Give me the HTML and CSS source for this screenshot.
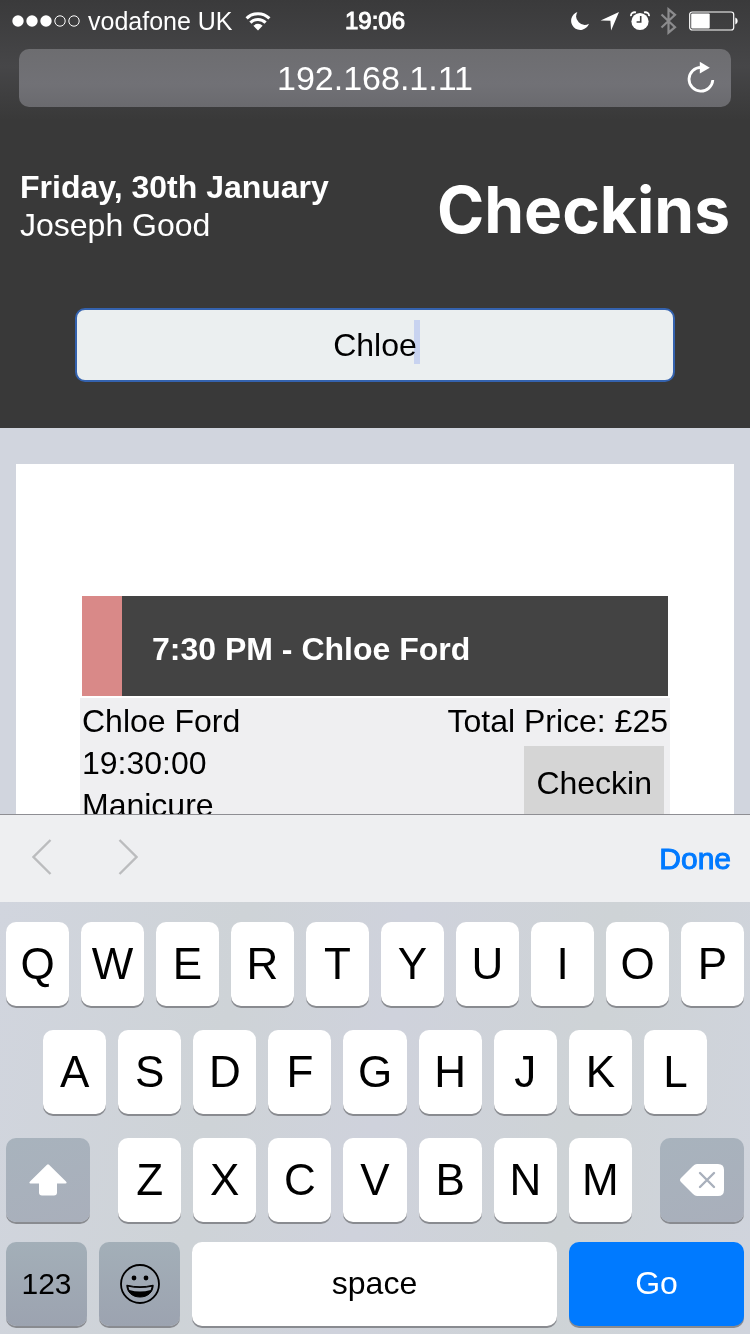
FILE: index.html
```html
<!DOCTYPE html>
<html lang="en">
<head>
<meta charset="utf-8">
<meta name="viewport" content="width=device-width, initial-scale=1">
<title>Checkins</title>
<link rel="stylesheet" href="styles.css">
</head>
<body>
<div class="chrome">
  <div class="status">
    <div class="status-left">
      <svg width="68" height="14" viewBox="0 0 68 14" aria-hidden="true"><g fill="#fff"><circle cx="6" cy="7" r="5.7"/><circle cx="20" cy="7" r="5.7"/><circle cx="34" cy="7" r="5.7"/></g><g fill="none" stroke="#fff"><circle cx="48" cy="7" r="5.2"/><circle cx="62" cy="7" r="5.2"/></g></svg>
      <span class="carrier">vodafone UK</span>
      <svg class="wifi" width="26" height="20" viewBox="0 0 26 20" aria-hidden="true"><g fill="none" stroke="#fff" stroke-width="3"><path d="M1.6 7.400a16 16 0 0 1 22.800 0"/><path d="M5.400 11.600a10.600 10.600 0 0 1 15.200 0"/></g><path d="M8.400 14.800a6.400 6.400 0 0 1 9.200 0L13 19.400z" fill="#fff"/></svg>
    </div>
    <time class="clock">19:06</time>
    <div class="status-right">
      <svg width="20" height="20" viewBox="0 0 20 20" aria-hidden="true"><path d="M7.400 1A9.200 9.200 0 1 0 19 12.800A8.600 8.600 0 0 1 7.400 1z" fill="#fff"/></svg>
      <svg width="20" height="20" viewBox="0 0 20 20" aria-hidden="true"><path d="M19 1L.6 9.400l9.800.4.7 9.800z" fill="#fff"/></svg>
      <svg width="20" height="20" viewBox="0 0 20 20" aria-hidden="true"><circle cx="10" cy="10.500" r="8.600" fill="#fff"/><path d="M1 5.200C.6 2.200 3 .8 6 1.400M19 5.200c.4-3-2-4.400-5-3.800" fill="none" stroke="#fff" stroke-width="1.800"/><path d="M10.700 5v6H6.600" fill="none" stroke="#3f3f40" stroke-width="1.600"/></svg>
      <svg width="18" height="28" viewBox="0 0 18 28" aria-hidden="true"><path d="M1.500 7.500L15 20.200l-6.500 5.500V2.300L15 7.800 1.500 20.500" fill="none" stroke="#8b8b8d" stroke-width="2.200"/></svg>
      <svg width="50" height="20" viewBox="0 0 50 20" aria-hidden="true"><rect x="1.700" y="1" width="44" height="18" rx="2.500" fill="none" stroke="#fff" stroke-width="1.200"/><rect x="3.200" y="2.500" width="18.500" height="15" rx="1" fill="#fff"/><path d="M47.300 6.600a3.600 3.600 0 0 1 0 6.800z" fill="#fff"/></svg>
    </div>
  </div>
  <div class="address">
    <span>192.168.1.11</span>
    <button class="reload" aria-label="Reload"><svg width="30" height="34" viewBox="0 0 30 34" aria-hidden="true"><path d="M15 6.300A11.900 11.900 0 1 0 26.800 19" fill="none" stroke="#fff" stroke-width="2.800"/><path d="M13.800.8l10 5.900-10 5.900z" fill="#fff"/></svg></button>
  </div>
</div>
<header class="header">
  <div class="heading">
    <div class="who"><strong>Friday, 30th January</strong><span>Joseph Good</span></div>
    <h1>Checkins</h1>
  </div>
  <div class="search"><input type="text" value="Chloe" aria-label="Search checkins"><span class="caret"></span></div>
</header>
<main class="page">
  <section class="card">
    <article class="booking">
      <h2>7:30 PM - Chloe Ford</h2>
      <div class="details">
        <div class="column"><span>Chloe Ford</span><span>19:30:00</span><span>Manicure</span></div>
        <div class="column end"><span>Total Price: £25</span><button class="checkin">Checkin</button></div>
      </div>
    </article>
  </section>
</main>
<div class="toolbar">
  <div class="arrows">
    <button aria-label="Previous"><svg width="20" height="36" viewBox="0 0 20 36" aria-hidden="true"><path d="M18.500 1L1.500 18l17 17" fill="none" stroke="#bbbcbe" stroke-width="2.400"/></svg></button>
    <button aria-label="Next"><svg width="20" height="36" viewBox="0 0 20 36" aria-hidden="true"><path d="M1.500 1l17 17-17 17" fill="none" stroke="#bbbcbe" stroke-width="2.400"/></svg></button>
  </div>
  <button class="done">Done</button>
</div>
<div class="keyboard">
  <div class="row"><button class="key">Q</button><button class="key">W</button><button class="key">E</button><button class="key">R</button><button class="key">T</button><button class="key">Y</button><button class="key">U</button><button class="key">I</button><button class="key">O</button><button class="key">P</button></div>
  <div class="row inset"><button class="key">A</button><button class="key">S</button><button class="key">D</button><button class="key">F</button><button class="key">G</button><button class="key">H</button><button class="key">J</button><button class="key">K</button><button class="key">L</button></div>
  <div class="row spread">
    <button class="key side" aria-label="Shift"><svg width="38" height="32" viewBox="0 0 38 32" aria-hidden="true"><path d="M18 .7q1-1 2 0L37 17.500q1.500 2-.5 2H28v9q0 3-3 3H13q-3 0-3-3v-9H1.500q-2 0-.5-2z" fill="#fff"/></svg></button>
    <div class="row letters"><button class="key">Z</button><button class="key">X</button><button class="key">C</button><button class="key">V</button><button class="key">B</button><button class="key">N</button><button class="key">M</button></div>
    <button class="key side" aria-label="Delete"><svg width="44" height="32" viewBox="0 0 44 32" aria-hidden="true"><path d="M17 0h21q6 0 6 6v20q0 6-6 6H17q-2 0-4-2L1 18q-2-2 0-4L13 2q2-2 4-2z" fill="#fff"/><path d="M20 9l14 14M34 9L20 23" stroke="#a9b0bc" stroke-width="2.400" stroke-linecap="round"/></svg></button>
  </div>
  <div class="row bottom">
    <button class="key small dark">123</button>
    <button class="key small dark" aria-label="Emoji"><svg width="40" height="40" viewBox="0 0 40 40" aria-hidden="true"><circle cx="20" cy="20" r="19" fill="none" stroke="#000" stroke-width="1.800"/><circle cx="14" cy="14" r="2.400"/><circle cx="26" cy="14" r="2.400"/><path d="M6.800 21.200q13.200 3.200 26.400 0C33 28 28 33 20 33S7 28 6.800 21.200z" stroke="#000"/><path d="M8.400 22.800q11.600 2.600 23.200 0l-.9 3.200q-10.700 3-21.400 0z" fill="#a1aab6"/></svg></button>
    <button class="key word space">space</button>
    <button class="key word go">Go</button>
  </div>
</div>
</body>
</html>
```
FILE: styles.css
```css
* { box-sizing: border-box; }

body {
  margin: 0;
  height: 100vh;
  display: flex;
  flex-direction: column;
  overflow: hidden;
  background: #d1d5de;
  color: #000;
  font: 32px/42px "Liberation Sans", Arial, sans-serif;
}

button {
  border: 0;
  padding: 0;
  background: none;
  color: inherit;
  font: inherit;
}

svg { display: block; flex: none; }

.chrome {
  padding: 0 19px 13px;
  background: linear-gradient(#3a3a3b, #464648 55%, #393939);
  color: #fff;
}

.status {
  display: grid;
  grid-template-columns: 1fr auto 1fr;
  align-items: center;
  height: 41px;
  margin: 0 -7px 8px;
  font-size: 24px;
  line-height: 42px;
}

.status-left, .status-right { display: flex; align-items: center; }
.carrier { margin-left: 8px; font-size: 25px; }
.wifi { margin-left: 12px; }
.clock { -webkit-text-stroke: 1px #fff; }
.status-right { justify-content: flex-end; gap: 10px; }

.address {
  position: relative;
  height: 58px;
  border-radius: 10px;
  background: linear-gradient(#6d6d70, #717176 60%, #6a6a6e);
  font-size: 34px;
  line-height: 58px;
  text-align: center;
}

.reload { position: absolute; right: 15px; top: 12px; }

.header {
  padding: 48px 20px 46px;
  background: #393939;
  color: #fff;
}

.heading {
  display: flex;
  justify-content: space-between;
  margin-bottom: 64px;
}

.who {
  display: flex;
  flex-direction: column;
  line-height: 38px;
}

h1 {
  margin: 0;
  font: 700 64px/84px Inter, sans-serif;
  height: 76px;
}

.search {
  position: relative;
  width: 80vw;
  margin: 0 auto;
}

.search input {
  display: block;
  width: 100%;
  height: 74px;
  border: 2px solid #3462ae;
  border-radius: 10px;
  outline: 0;
  background: #ebeff0;
  color: #000;
  font: inherit;
  text-align: center;
}

.caret {
  position: absolute;
  left: calc(50% + 39px);
  top: 12px;
  width: 6px;
  height: 44px;
  background: #d9e1ff;
  mix-blend-mode: multiply;
}

.page {
  flex: 1;
  min-height: 0;
  overflow: hidden;
  padding: 36px 16px 0;
}

.card {
  padding: 132px 64px 64px;
  background: #fff;
}

h2 {
  margin: 0 2px 2px;
  padding: 6px 30px 0;
  border-left: 40px solid #d98988;
  background: #434343;
  color: #fff;
  font-size: 32px;
  line-height: 94px;
}

.details {
  display: flex;
  justify-content: space-between;
  padding: 2px;
  background: #efeff1;
}

.column { display: flex; flex-direction: column; }
.end { align-items: flex-end; }

.checkin {
  margin: 4px;
  padding: 16px 12px;
  background: #d5d5d5;
}

.toolbar {
  display: flex;
  justify-content: space-between;
  align-items: center;
  height: 88px;
  padding: 0 19px 0 32px;
  border-top: 1px solid #8e8e93;
  background: #eeeff1;
}

.arrows { display: flex; gap: 66px; padding-bottom: 4px; }

.done {
  color: #007aff;
  font-size: 30px;
  -webkit-text-stroke: 1px #007aff;
}

.keyboard {
  display: flex;
  flex-direction: column;
  gap: 24px;
  padding: 20px 6px 8px;
  background: linear-gradient(100deg, #d1d5de, #ced3d7 30%, #cfd2dc 50%, #ced3d6 75%, #d0d4dd);
}

.row { display: flex; gap: 12px; }
.inset { padding: 0 37px; }
.spread { gap: 28px; }
.letters { flex: 1; }

.key {
  display: flex;
  flex: 1;
  align-items: center;
  justify-content: center;
  min-width: 0;
  height: 84px;
  border-radius: 10px;
  background: #fff;
  box-shadow: 0 2px 0 #898b90;
  font-size: 44px;
}

.side { flex: 0 0 84px; background: linear-gradient(160deg, #a8b3bd, #a9afbb); }
.bottom { margin-top: -4px; }
.small { font-size: 30px; }
.word { padding-bottom: 2px; font-size: 32px; }
.dark { flex: 0 0 81px; background: linear-gradient(#a3afb8, #9ca3b0); }
.space { flex: 365; }
.go { flex: 175; background: #007aff; color: #fff; }
```
